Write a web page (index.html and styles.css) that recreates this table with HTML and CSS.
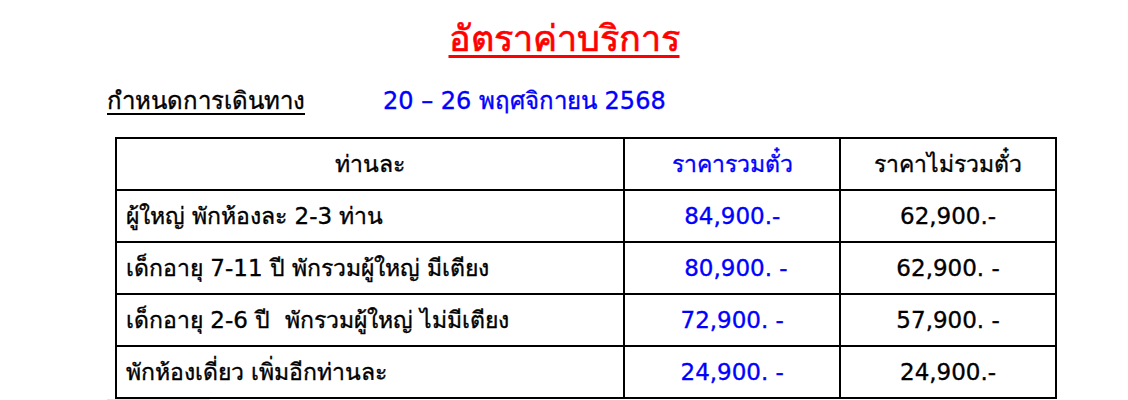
FILE: index.html
```html
<!DOCTYPE html>
<html lang="th">
<head>
<meta charset="utf-8">
<title>อัตราค่าบริการ</title>
<link rel="stylesheet" href="styles.css">
</head>
<body>
<div class="page">
  <h1 class="title">อัตราค่าบริการ</h1>
  <div class="schedule">
    <span class="schedule-label">กำหนดการเดินทาง</span>
    <span class="schedule-date">20 – 26 พฤศจิกายน 2568</span>
  </div>
  <table class="rates">
    <colgroup>
      <col class="col-desc">
      <col class="col-price">
      <col class="col-price">
    </colgroup>
    <thead>
      <tr>
        <th class="center">ท่านละ</th>
        <th class="center blue">ราคารวมตั๋ว</th>
        <th class="center">ราคาไม่รวมตั๋ว</th>
      </tr>
    </thead>
    <tbody>
      <tr>
        <td>ผู้ใหญ่ พักห้องละ 2-3 ท่าน</td>
        <td class="center blue">84,900.-</td>
        <td class="center">62,900.-</td>
      </tr>
      <tr>
        <td>เด็กอายุ 7-11 ปี พักรวมผู้ใหญ่ มีเตียง</td>
        <td class="center blue">&nbsp;80,900. -</td>
        <td class="center">62,900. -</td>
      </tr>
      <tr>
        <td>เด็กอายุ 2-6 ปี &nbsp;พักรวมผู้ใหญ่ ไม่มีเตียง</td>
        <td class="center blue">72,900. -</td>
        <td class="center">57,900. -</td>
      </tr>
      <tr>
        <td>พักห้องเดี่ยว เพิ่มอีกท่านละ</td>
        <td class="center blue">24,900. -</td>
        <td class="center">24,900.-</td>
      </tr>
    </tbody>
  </table>
  <div class="note"><span class="highlight">หมายเหตุ</span></div>
</div>
</body>
</html>
```
FILE: styles.css
```css
html, body {
  margin: 0;
  padding: 0;
  background: #ffffff;
}
body {
  font-family: "DejaVu Sans", "Noto Sans", "Liberation Sans", sans-serif;
  color: #000000;
  -webkit-text-stroke: 0.35px currentColor;
}
.page {
  width: 1128px;
  padding-top: 14px;
}
.title {
  margin: 0;
  text-align: center;
  color: #ff0000;
  font-size: 36px;
  font-weight: normal;
  -webkit-text-stroke: 0.7px currentColor;
  text-decoration: underline;
  text-decoration-thickness: 3px;
  text-underline-offset: 4px;
  line-height: 50px;
}
.schedule {
  display: flex;
  align-items: baseline;
  padding-left: 107px;
  margin-top: 22px;
  font-size: 24px;
  line-height: 30px;
}
.schedule-label {
  text-decoration: underline;
  text-decoration-thickness: 2px;
  text-underline-offset: 4px;
  width: 276px;
}
.schedule-date {
  color: #0000ff;
}
.rates {
  margin-top: 21px;
  margin-left: 115px;
  width: 942px;
  border-collapse: collapse;
  font-size: 23px;
}
.col-desc { width: 509px; }
.col-price { width: 216px; }
.rates th,
.rates td {
  border: 2px solid #000000;
  height: 50px;
  padding: 0 9px;
  font-weight: normal;
  text-align: left;
  vertical-align: middle;
}
.rates .center {
  text-align: center;
}
.blue {
  color: #0000ff;
}
.note {
  display: flex;
  padding-left: 107px;
  font-size: 22px;
  line-height: 26px;
}
.highlight {
  display: block;
  width: 103px;
  text-align: center;
  background: #ffff00;
}
```
